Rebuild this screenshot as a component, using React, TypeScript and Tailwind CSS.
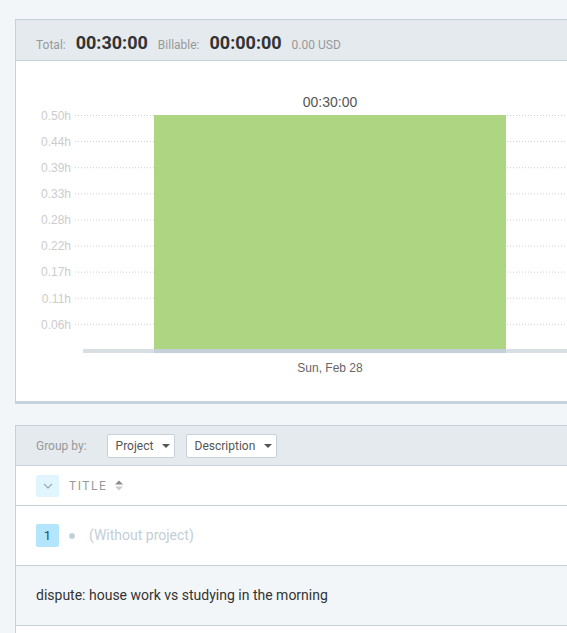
import React from "react";

const yLabels = ["0.50h", "0.44h", "0.39h", "0.33h", "0.28h", "0.22h", "0.17h", "0.11h", "0.06h"];

function Caret() {
  return (
    <svg width="8" height="4" viewBox="0 0 8 4" className="ml-[9px]">
      <path d="M0 0 L8 0 L4 4 Z" fill="#555" />
    </svg>
  );
}

function Chart() {
  return (
    <svg width="600" height="340" className="block" style={{ fontFamily: '"Liberation Sans", Arial, sans-serif' }}>
      {yLabels.map((l, i) => {
        const y = 54.5 + i * 26.1;
        return (
          <g key={l}>
            <line x1="59" x2="600" y1={y} y2={y} stroke="#cfcfcf" strokeWidth="1" strokeDasharray="1 2" />
            <text x="55" y={y + 4.3} textAnchor="end" fontSize="12" fill="#cccccc">
              {l}
            </text>
          </g>
        );
      })}
      <rect x="67" y="288" width="540" height="4" fill="#d8dfe4" />
      <rect x="138" y="54" width="352" height="234" fill="#aed581" />
      <rect x="138" y="288" width="352" height="4" fill="#c5d0d8" />
      <text x="314" y="46" textAnchor="middle" fontSize="14" fill="#555">
        00:30:00
      </text>
      <text x="314" y="311" textAnchor="middle" fontSize="12" fill="#666">
        Sun, Feb 28
      </text>
    </svg>
  );
}

export default function App() {
  return (
    <div
      className="w-[567px] h-[633px] overflow-hidden bg-[#f2f6f8]"
      style={{ fontFamily: 'Roboto, "Liberation Sans", sans-serif' }}
    >
      <div className="pt-[19px] pl-[15px]">
        {/* Summary card */}
        <div className="w-[620px] border border-[#c6d2d9] border-b-[3px] bg-white">
          <div className="h-[41px] bg-[#e4eaee] border-b border-[#c6d2d9] flex items-baseline pl-[20px] pt-[9px] gap-[10px]">
            <span className="text-[12px] text-[#999]">Total:</span>
            <span className="text-[18px] font-bold text-[#333]">00:30:00</span>
            <span className="text-[12px] text-[#999]">Billable:</span>
            <span className="text-[18px] font-bold text-[#333]">00:00:00</span>
            <span className="text-[12px] text-[#999]">0.00 USD</span>
          </div>
          <div className="h-[340px]">
            <Chart />
          </div>
        </div>

        {/* Table card */}
        <div className="mt-[21px] w-[620px] border-l border-t border-[#c6d2d9] bg-white">
          <div className="h-[40px] bg-[#e4eaee] border-b border-[#c6d2d9] flex items-center pl-[20px]">
            <span className="text-[12px] text-[#999] mr-[20px]">Group by:</span>
            <button className="h-[24px] w-[68px] bg-white border border-[#c6d2d9] rounded-[2px] flex items-center pl-[8px] pt-[1px] text-[12px] text-[#555]">
              Project
              <Caret />
            </button>
            <button className="ml-[11px] h-[24px] w-[91px] bg-white border border-[#c6d2d9] rounded-[2px] flex items-center pl-[8px] pt-[1px] text-[12px] text-[#555]">
              Description
              <Caret />
            </button>
          </div>
          <div className="h-[40px] border-b border-[#c6d2d9] flex items-center pl-[20px]">
            <div className="w-[23px] h-[22px] bg-[#e1f5fe] rounded-[2px] flex items-center justify-center">
              <svg width="10" height="6" viewBox="0 0 10 6">
                <path d="M1 1 L5 5 L9 1" fill="none" stroke="#98a8b3" strokeWidth="1.1" />
              </svg>
            </div>
            <span className="ml-[10px] text-[12px] tracking-[1.5px] text-[#999]">TITLE</span>
            <svg width="8" height="11" viewBox="0 0 8 11" className="ml-[8px]">
              <path d="M0 4.5 L4 0.5 L8 4.5 Z" fill="#8a8a8a" />
              <path d="M0 6.5 L8 6.5 L4 10.5 Z" fill="#cccccc" />
            </svg>
          </div>
          <div className="h-[60px] border-b border-[#c6d2d9] flex items-center pl-[20px]">
            <div className="w-[23px] h-[23px] bg-[#b3e5fc] rounded-[2px] flex items-center justify-center text-[13px] text-[#1e4f6b]">
              1
            </div>
            <span className="ml-[10px] w-[6px] h-[6px] rounded-full bg-[#c6d2d9]" />
            <span className="ml-[14px] text-[14px] text-[#c3ced6]">(Without project)</span>
          </div>
          <div className="h-[60px] border-b border-[#c6d2d9] bg-[#f2f6f8] flex items-center pl-[20px]">
            <span className="text-[14px] text-[#333]">dispute: house work vs studying in the morning</span>
          </div>
          <div className="h-[40px] bg-white" />
        </div>
      </div>
    </div>
  );
}
